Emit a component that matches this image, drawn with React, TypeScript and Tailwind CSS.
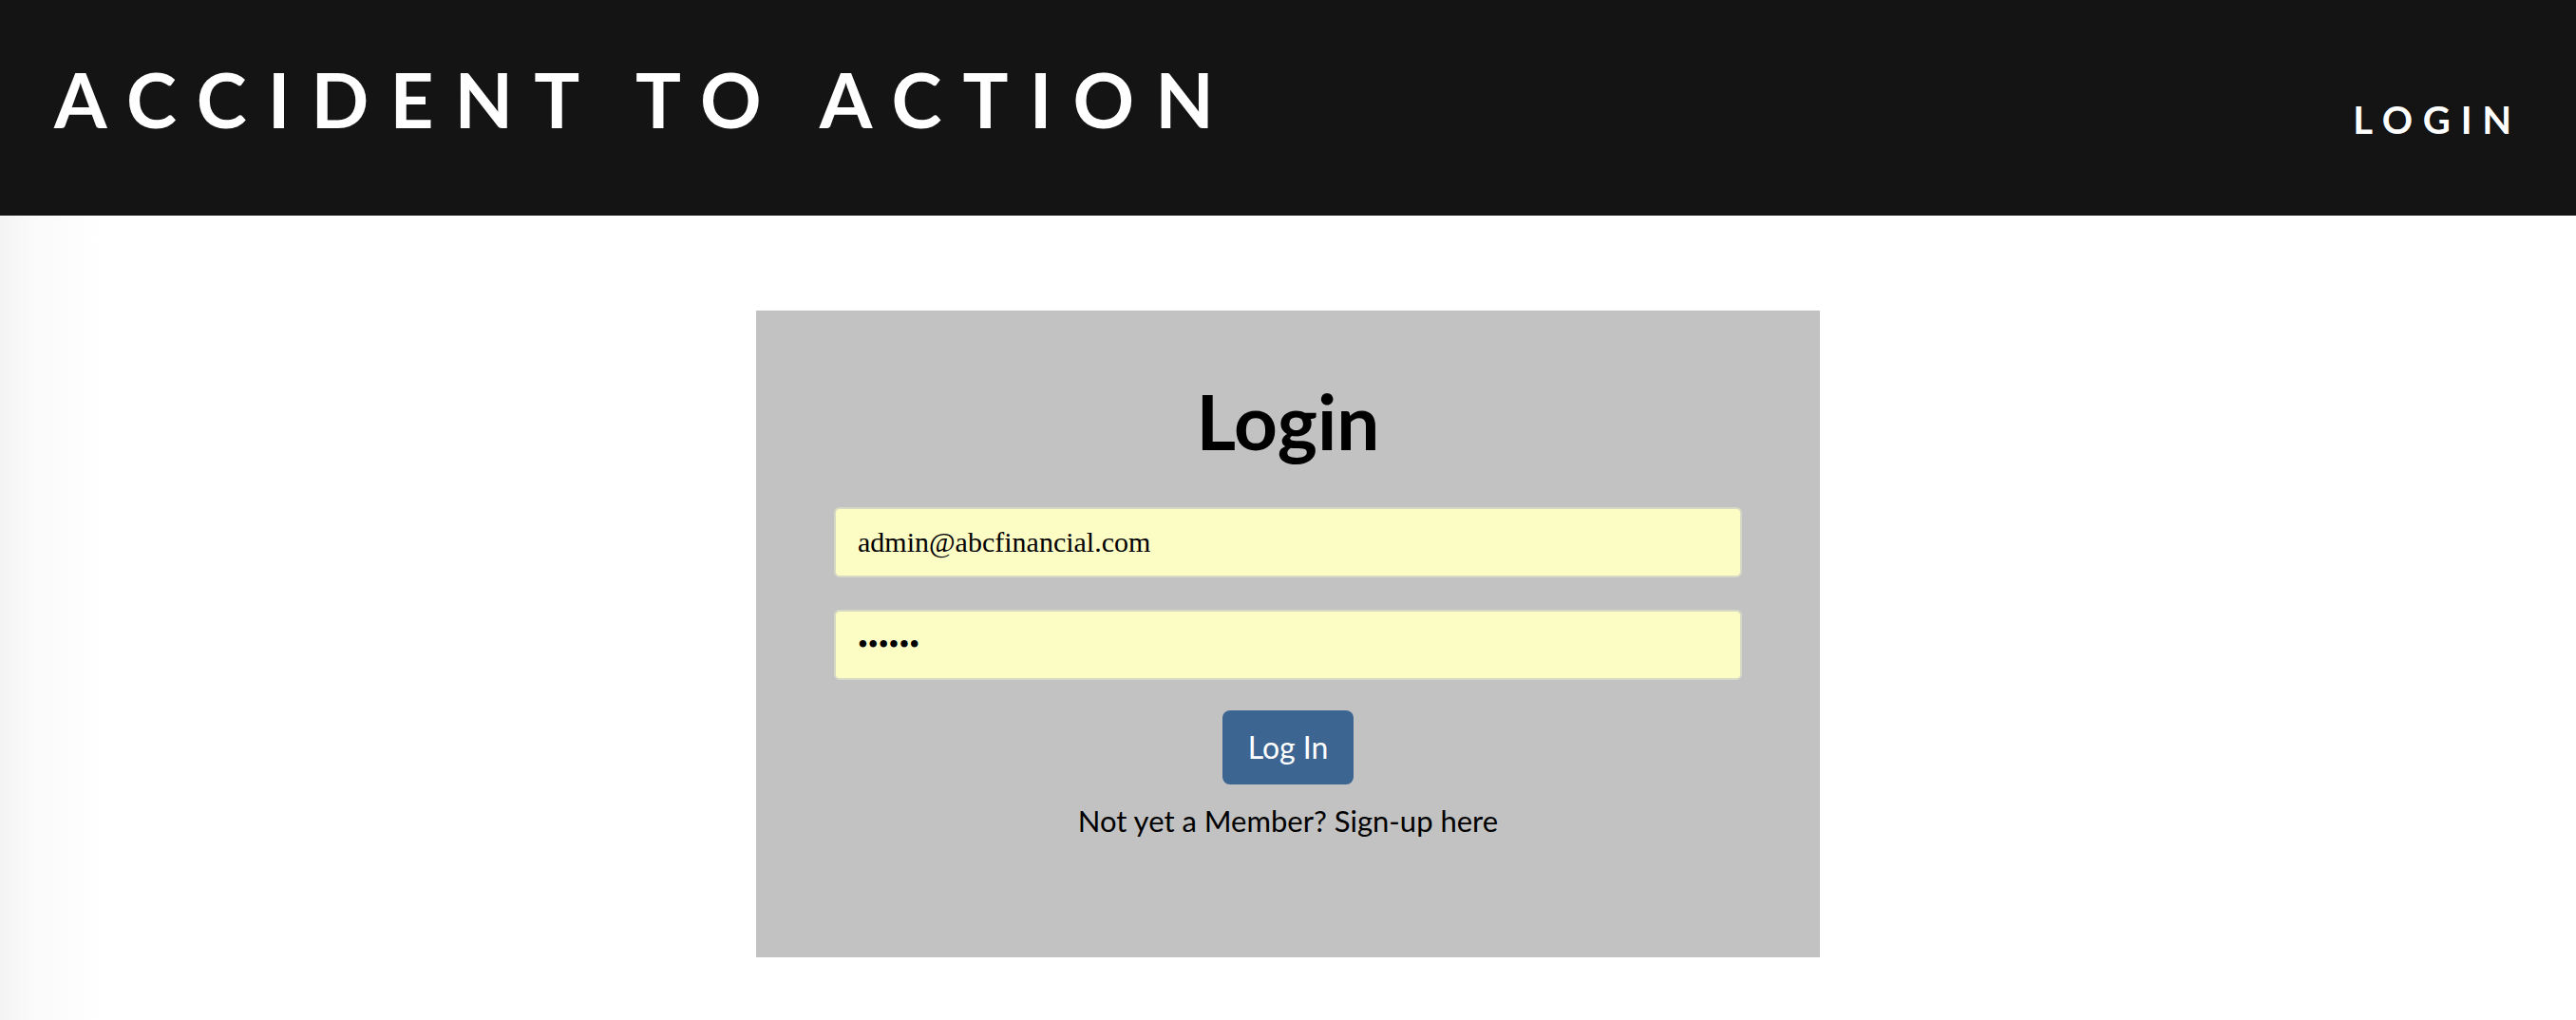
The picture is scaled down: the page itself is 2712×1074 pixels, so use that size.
import React from "react";

export default function App() {
    return (
        <div className="min-h-screen bg-white font-[Lato,'Open_Sans',sans-serif] text-black">
            {/* Top bar */}
            <header className="flex h-[227px] items-start justify-between bg-[#141414] px-[57px] text-white">
                <h1 className="mt-[64px] text-[80px] leading-none font-bold tracking-[0.276em]">
                    ACCIDENT TO ACTION
                </h1>
                <a className="mt-[106px] cursor-pointer text-[40px] leading-none font-bold tracking-[0.27em]">
                    LOGIN
                </a>
            </header>

            {/* Body */}
            <main className="min-h-[847px] bg-[linear-gradient(to_right,#f4f4f4,#fbfbfb_40px,#ffffff_110px)] pt-[100px]">
                <div className="mx-auto flex h-[681px] w-[1120px] flex-col items-center bg-[#c2c2c2] pt-[76px]">
                    <h2 className="text-[80px] leading-none font-bold">Login</h2>

                    <form className="mt-[51px] flex w-[956px] flex-col items-center">
                        <input
                            type="email"
                            defaultValue="admin@abcfinancial.com"
                            className="h-[74px] w-full rounded-[6px] border-2 border-[#d8d8c6] bg-[#fcfcc5] px-[23px] font-['Liberation_Serif',serif] text-[30px] text-black outline-none"
                        />
                        <input
                            type="password"
                            defaultValue="abcdef"
                            className="mt-[34px] h-[74px] w-full rounded-[6px] border-2 border-[#d8d8c6] bg-[#fcfcc5] px-[23px] font-['Liberation_Serif',serif] text-[31px] text-black outline-none"
                        />
                        <button
                            type="button"
                            className="mt-[32px] h-[78px] w-[138px] rounded-[8px] bg-[#3d6592] text-[32px] leading-none text-white"
                        >
                            Log In
                        </button>
                        <p className="mt-[23px] text-[31px] leading-none">
                            Not yet a Member? Sign-up here
                        </p>
                    </form>
                </div>
            </main>
        </div>
    );
}
